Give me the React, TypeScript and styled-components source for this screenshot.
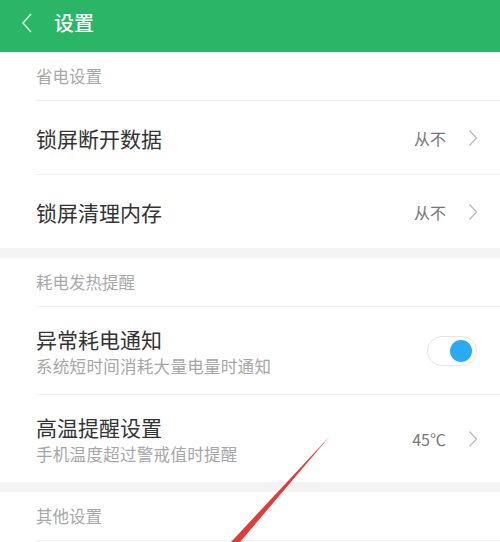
import React from "react";
import styled, { createGlobalStyle } from "styled-components";

const Global = createGlobalStyle`
  html, body { margin: 0; padding: 0; background: #fff; }
  body { font-family: "Noto Sans CJK SC", "Noto Sans", sans-serif; }
`;

const Page = styled.div`
  position: relative;
  width: 500px;
  height: 542px;
  overflow: hidden;
  background: #fff;
`;

const Header = styled.div`
  height: 52px;
  background: #2bb566;
  display: flex;
  align-items: center;
  padding-left: 20px;
  gap: 20px;
  color: #fff;
`;

const Title = styled.div`
  font-size: 20px;
  font-weight: 500;
  line-height: 1;
  margin-top: -6px;
`;

const BackIcon = styled.svg`
  width: 14px;
  height: 22px;
  margin-top: -6px;
`;

const Section = styled.div`
  background: #fff;
`;

const Gap = styled.div`
  height: 10px;
  background: #f4f4f4;
`;

const SectionTitle = styled.div`
  height: 48px;
  display: flex;
  align-items: center;
  margin-left: 36px;
  font-size: 16.5px;
  color: #a8a8a8;
  border-bottom: 1px solid #efefef;
`;

const Row = styled.div<{ $tall?: boolean; $last?: boolean }>`
  height: ${(p) => (p.$tall ? 87 : 73)}px;
  display: flex;
  align-items: center;
  margin-left: 36px;
  padding-right: 22px;
  border-bottom: ${(p) => (p.$last ? "none" : "1px solid #efefef")};
`;

const Texts = styled.div`
  flex: 1;
  display: flex;
  flex-direction: column;
`;

const Label = styled.div`
  font-size: 21px;
  color: #333;
  line-height: 30px;
`;

const Sub = styled.div`
  font-size: 16.5px;
  color: #a6a6a6;
  line-height: 24px;
  letter-spacing: 0.3px;
`;

const Value = styled.div`
  font-size: 16px;
  color: #777;
  margin-right: 22px;
  font-family: "Noto Sans CJK SC", "Liberation Sans", sans-serif;
`;

const Chevron = styled.svg`
  width: 10px;
  height: 18px;
`;

const Toggle = styled.div`
  width: 50px;
  height: 30px;
  border-radius: 15px;
  border: 1px solid #e6e6e6;
  background: #fff;
  display: flex;
  align-items: center;
  justify-content: flex-end;
  padding-right: 4px;
  box-sizing: border-box;
  margin-right: 1px;
`;

const Knob = styled.div`
  width: 22px;
  height: 22px;
  border-radius: 50%;
  background: #2ba9f3;
`;

const Arrow = styled.svg`
  position: absolute;
  left: 0;
  top: 0;
  width: 500px;
  height: 542px;
  pointer-events: none;
`;

const ChevronIcon = () => (
  <Chevron viewBox="0 0 10 18">
    <path d="M1.5 1.5 L8.5 9 L1.5 16.5" fill="none" stroke="#bbb" strokeWidth="1.3" />
  </Chevron>
);

export default function App() {
  return (
    <Page>
      <Global />
      <Header>
        <BackIcon viewBox="0 0 14 22">
          <path d="M11 2 L3 11 L11 20" fill="none" stroke="#d8f3e2" strokeWidth="1.6" />
        </BackIcon>
        <Title>设置</Title>
      </Header>
      <Section>
        <SectionTitle>省电设置</SectionTitle>
        <Row>
          <Texts>
            <Label>锁屏断开数据</Label>
          </Texts>
          <Value>从不</Value>
          <ChevronIcon />
        </Row>
        <Row $last>
          <Texts>
            <Label>锁屏清理内存</Label>
          </Texts>
          <Value>从不</Value>
          <ChevronIcon />
        </Row>
      </Section>
      <Gap />
      <Section>
        <SectionTitle>耗电发热提醒</SectionTitle>
        <Row $tall>
          <Texts>
            <Label>异常耗电通知</Label>
            <Sub>系统短时间消耗大量电量时通知</Sub>
          </Texts>
          <Toggle>
            <Knob />
          </Toggle>
        </Row>
        <Row $tall $last>
          <Texts>
            <Label>高温提醒设置</Label>
            <Sub>手机温度超过警戒值时提醒</Sub>
          </Texts>
          <Value>45℃</Value>
          <ChevronIcon />
        </Row>
      </Section>
      <Gap />
      <Section>
        <SectionTitle>其他设置</SectionTitle>
      </Section>
      <Arrow viewBox="0 0 500 542">
        <polygon points="330,436 231,542 240,542" fill="#e23b3b" />
      </Arrow>
    </Page>
  );
}
